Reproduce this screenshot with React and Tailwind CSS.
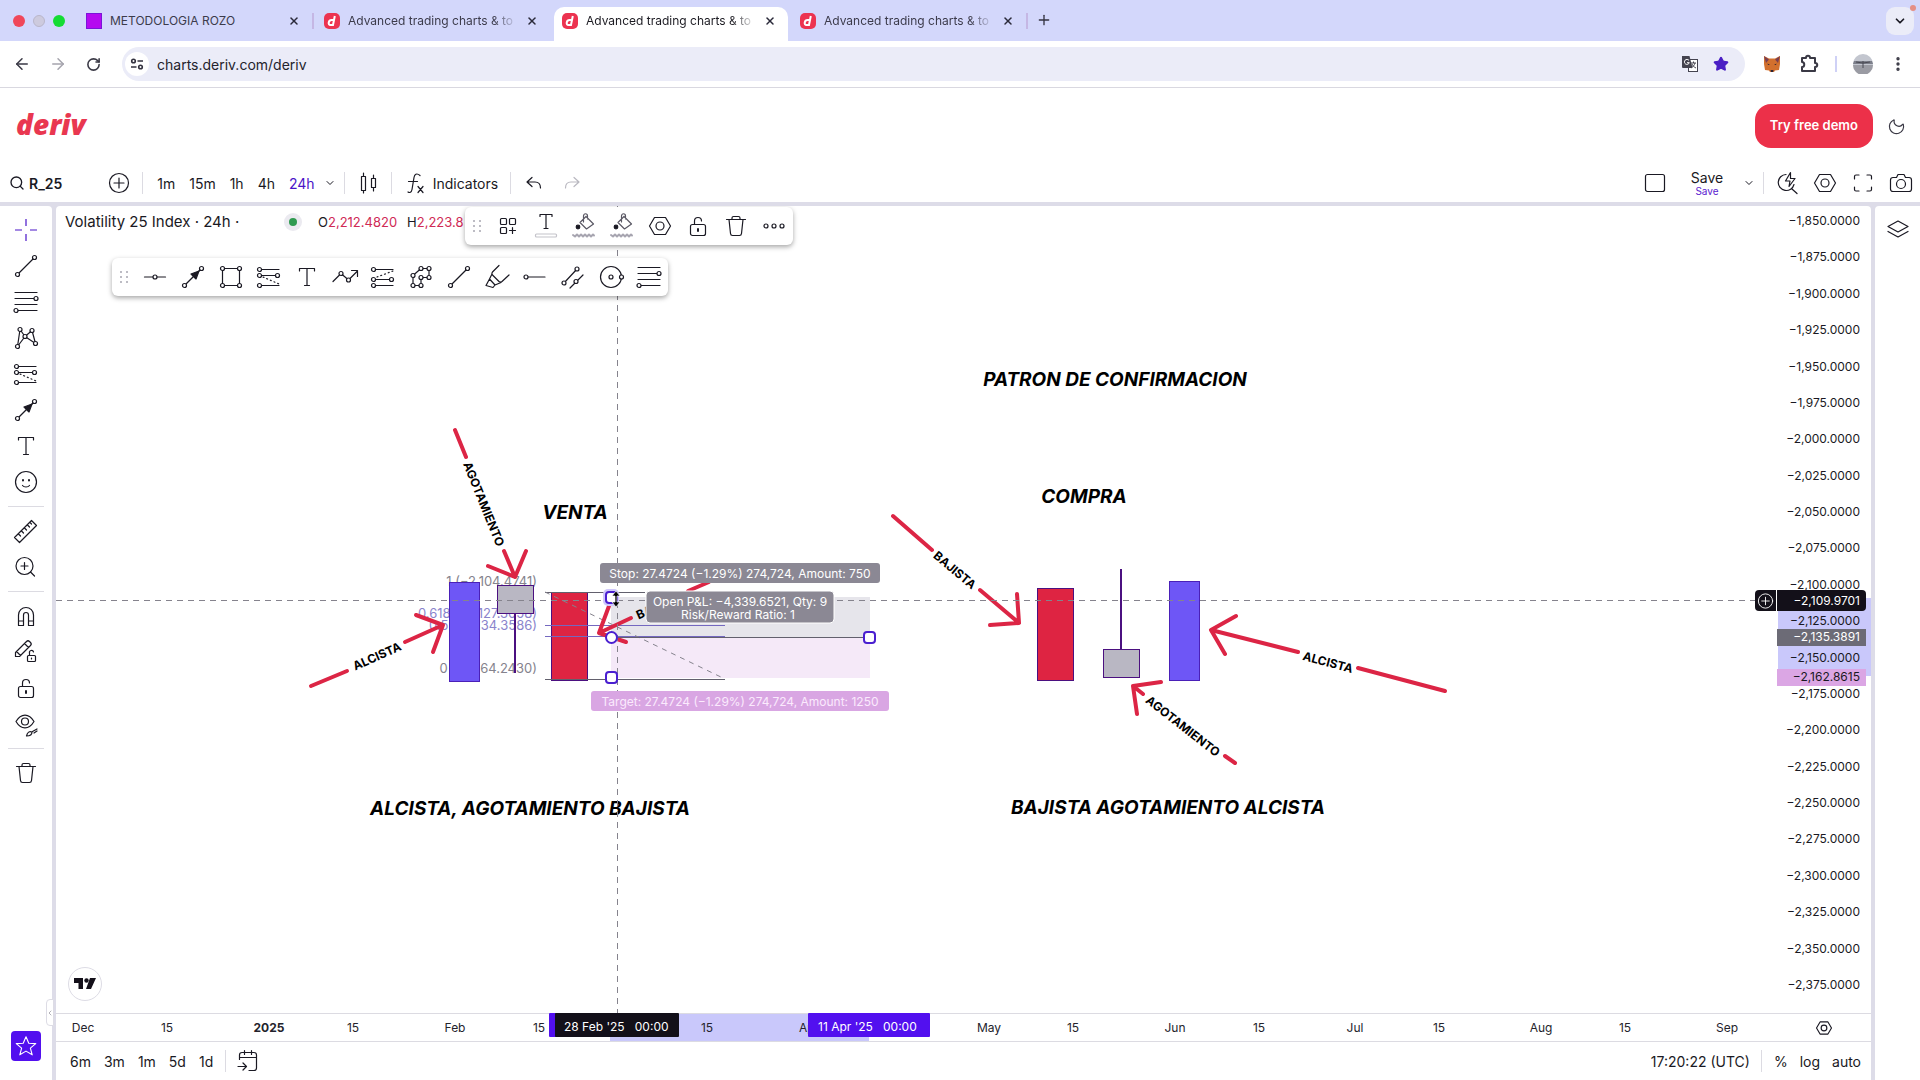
import React from 'react';
import clsx from 'clsx';
import { ArrowLeft, ArrowRight, RotateCw, X, Plus, ChevronDown, ChevronLeft, Moon, Search, Star, EllipsisVertical } from 'lucide-react';

const RED = '#dc2545';

const Icon = ({ size = 28, width = 1.2, children }) => (
    <svg
        width={size}
        height={size}
        viewBox="0 0 28 28"
        fill="none"
        stroke="currentColor"
        strokeWidth={width}
        strokeLinecap="round"
        strokeLinejoin="round"
        aria-hidden="true"
    >
        {children}
    </svg>
);

/* Small hollow anchor used by most of the drawing tool icons */
const Dot = ({ x, y }) => <circle cx={x} cy={y} r="2" fill="white" />;

const icons = {
    cross: <path d="M14 3v7M14 18v7M3 14h7M18 14h7" strokeLinecap="butt" />,
    trend: <><path d="M5.5 22.5l17-17" /><Dot x={5.5} y={22.5} /><Dot x={22.5} y={5.5} /></>,
    fib: <><path d="M3 4.5h22M3 10.5h22M3 16.5h22M3 22.5h22" /><Dot x={24} y={10.5} /><Dot x={4} y={22.5} /></>,
    pattern: (
        <>
            <path d="M5.5 22.5L8 5.5l5 7 7-6 3.5 13L13 12.5z" />
            <Dot x={8} y={5.5} /><Dot x={20} y={6.5} /><Dot x={13} y={12.5} /><Dot x={5.5} y={22.5} /><Dot x={23.5} y={19.5} />
        </>
    ),
    projection: (
        <>
            <path d="M4.5 6.5H24M4.5 12.5h18M4.5 22.5H24" />
            <path d="M8 14l16 7" strokeDasharray="1 3" />
            <Dot x={4.5} y={6.5} /><Dot x={4.5} y={12.5} /><Dot x={22.5} y={12.5} /><Dot x={4.5} y={22.5} />
        </>
    ),
    shortPosition: (
        <>
            <path d="M4.5 6.5H24M4.5 16.5h18M4.5 22.5H24" />
            <path d="M8 14l16-6" strokeDasharray="1 3" />
            <Dot x={4.5} y={6.5} /><Dot x={4.5} y={16.5} /><Dot x={22.5} y={16.5} /><Dot x={4.5} y={22.5} />
        </>
    ),
    arrow: (
        <>
            <path d="M5.5 22.5l17-17" />
            <path d="M20 8l-3 8-5-5z" fill="currentColor" />
            <Dot x={5.5} y={22.5} /><Dot x={22.5} y={5.5} />
        </>
    ),
    text: <path d="M6.500 8V5.500h15V8M14 5.500v17M11.500 22.500h5" />,
    smile: (
        <>
            <circle cx="14" cy="14" r="10.500" />
            <path d="M10.500 17.500c1.500 2 5.500 2 7 0" />
            <path d="M11 12v.5M17 12v.5" strokeWidth="2" />
        </>
    ),
    ruler: <path d="M2.500 20.500l17-17 5 5-17 17zM6.500 17l2 2M9.500 14l2 2M12.500 11l2 2M15.500 8l2 2M18 5.500l1.500 1.500" />,
    zoomIn: <><circle cx="12.500" cy="13" r="8.500" /><path d="M12.500 9.500v7M9 13h7M18.500 19l4 4" /></>,
    magnet: <path d="M6.500 23.500V13a7.500 7.500 0 0 1 15 0v10.500h-5V13a2.500 2.500 0 0 0-5 0v10.500zM6.500 19h5M16.500 19h5" />,
    pencilLock: (
        <>
            <path d="M3.500 18.500v-4l11-11c1-1 2-1 3 0l1 1c1 1 1 2 0 3l-11 11zM12.500 5.500l4 4M4.500 13.500l4 4" />
            <rect x="15.500" y="17.500" width="8" height="6" rx="1" />
            <path d="M17.500 17.500v-2.500a2 2 0 0 1 4-1M19.500 20v1" />
        </>
    ),
    lock: (
        <>
            <rect x="6.500" y="12.500" width="15" height="11" rx="2" />
            <path d="M10.500 12.500V9a3.500 3.500 0 0 1 7 0" />
            <path d="M14 17v2" strokeWidth="2" />
        </>
    ),
    eye: (
        <>
            <path d="M4 11.500c5-8.500 13-8.500 18 0-5 8.500-13 8.500-18 0z" />
            <circle cx="13" cy="11.500" r="3.500" />
            <path d="M14.500 26c1-4 3-5 5.500-4 0 3-2 4-5.500 4zM20.500 21.500l4.500-2.500M22 23l3-2" />
        </>
    ),
    trash: <path d="M4.500 7.500h19M10 7.500V6c0-1 .5-1.500 1.500-1.500h5c1 0 1.500.5 1.500 1.500v1.500M7 7.500l1.500 14c.1 1.200.8 2 2 2h7c1.200 0 1.900-.8 2-2L21 7.500" />,
    hline: <><path d="M3.500 14h21" /><Dot x={14} y={14} /></>,
    rect: (
        <>
            <rect x="5.500" y="5.500" width="17" height="17" />
            <Dot x={5.5} y={5.5} /><Dot x={22.5} y={5.5} /><Dot x={5.5} y={22.5} /><Dot x={22.5} y={22.5} />
        </>
    ),
    path: <><path d="M2 18.500l8-8 7.500 6.500L26.500 8M20.500 7.500h6v6" /><Dot x={10} y={10.500} /><Dot x={17.500} y={17} /></>,
    poly: (
        <>
            <path d="M14 5.500h8v9h-8v8H6v-10z" />
            <Dot x={14} y={5.5} /><Dot x={22} y={5.5} /><Dot x={22} y={14.5} /><Dot x={14} y={14.5} /><Dot x={14} y={22.5} /><Dot x={6} y={22.5} /><Dot x={6} y={12.5} />
        </>
    ),
    brush: <path d="M16 2.500L9.500 9c-.8.800-.8 2 0 3l6.500 6.500c1 .8 2 .8 3 0l7-6.500M9 11l-2.500 5 5.500 6 6-2.500M6.500 16L3 22.500l7 2 2-2.500" />,
    ray: <><path d="M5 14h19" /><Dot x={5} y={14} /></>,
    channel: <><path d="M5 20L18 6M11 25L24 12" /><Dot x={5} y={20} /><Dot x={18} y={6} /><Dot x={17} y={18.500} /></>,
    circle: <><circle cx="14" cy="14" r="10.500" /><circle cx="14" cy="14" r="2" /><Dot x={24.500} y={14} /></>,
    template: (
        <>
            <rect x="6.500" y="6.500" width="6" height="6" rx="1" /><rect x="15.500" y="6.500" width="6" height="6" rx="1" />
            <rect x="6.500" y="15.500" width="6" height="6" rx="1" /><path d="M18.500 15.500v6M15.500 18.500h6" />
        </>
    ),
    textColor: (
        <>
            <path d="M8 4.500V2.500h12v2M14 2.500v14M12 16.500h4" />
            <rect x="3.500" y="22" width="21" height="3" rx="1" stroke="#c4c3ca" />
        </>
    ),
    bucket: (
        <>
            <path d="M10 10.500l6-6 7.500 7.500-7 5zM13.500 10V4c0-3 4-3 4 0v3" stroke="#5b5965" />
            <circle cx="8" cy="15" r="1.800" fill="currentColor" />
            <path d="M3 23l2 1.500 2-2 2 2 2-2 2 2 2-2 2 2 2-2 2 2 2-2 1 1" stroke="#a7a5b0" strokeWidth="2" />
        </>
    ),
    hexagon: <><path d="M8.500 5.500h11L24.500 14l-5 8.500h-11L3.500 14z" /><circle cx="14" cy="14" r="4" /></>,
    more: <><circle cx="6" cy="14" r="2" /><circle cx="14" cy="14" r="2" /><circle cx="22" cy="14" r="2" /></>,
    addCircle: <><circle cx="14" cy="14" r="9.500" /><path d="M14 9v10M9 14h10" /></>,
    candles: <path d="M7.500 7.500h4v14h-4zM9.500 4v3.500M9.500 21.500V24M17.500 9.500h4v9h-4zM19.500 6v3.500M19.500 18.500V22" />,
    fx: <path d="M19 6.500c-3.500-3-5.500-1-6 2l-2 12c-.5 3-2.500 3.500-4 2.500M7.500 12.500h9M17 17.500l5 6M22 17.500l-5 6" />,
    undo: <path d="M12 8.500l-5 4.500 5 4.500M7 13h8c3.500 0 5.500 2 5.500 6" />,
    redo: <path d="M16 8.500l5 4.500-5 4.500M21 13h-8c-3.500 0-5.500 2-5.500 6" />,
    layout: <rect x="4.500" y="5.500" width="19" height="17" rx="2" />,
    quick: <path d="M13 5.500a8 8 0 1 0 8 10M19 20l5 4.500M17.500 3.500l-5 8.500h4.500l-1 5.500 6-8h-4.500z" />,
    full: <path d="M5.500 10V7.500c0-1 .5-1.500 1.500-1.500h3M18 6h3c1 0 1.500.5 1.500 1.500V10M22.500 18v2.500c0 1-.5 1.500-1.500 1.500h-3M10 22H7c-1 0-1.500-.5-1.500-1.500V18" />,
    camera: <><path d="M6 8.500h3.500L11 5.500h6l1.500 3H22c1.500 0 2.500 1 2.500 2.500v9c0 1.500-1 2.500-2.500 2.500H6c-1.500 0-2.500-1-2.500-2.500v-9C3.500 9.500 4.500 8.500 6 8.500z" /><circle cx="14" cy="15" r="4.500" /></>,
    calendar: <path d="M5.500 12.500V8c0-1.500.8-2.500 2.500-2.500h12c1.500 0 2.500 1 2.500 2.500v13c0 1.500-1 2.500-2.500 2.500h-5M5.500 10.500h17M10.500 3.500v4M17.500 3.500v4M4 19.500h8M9 16l3.500 3.500L9 23" />,
    star: <path d="M14 4l3 7 7.500.5-5.800 4.800 2 7.200L14 19.500 7.300 23.500l2-7.200-5.800-4.800L11 11z" />,
    layers: <path d="M14 5l10 5.500L14 16 4 10.500zM4 15.500L14 21l10-5.500" />,
};

const IconButton = ({ name, label, className, size, width }) => (
    <button type="button" aria-label={label || name} className={clsx('flex shrink-0 items-center justify-center', className)}>
        <Icon size={size} width={width}>{icons[name]}</Icon>
    </button>
);

const DerivMark = () => (
    <svg className="shrink-0" width="16" height="16" viewBox="0 0 16 16" aria-hidden="true">
        <rect width="16" height="16" rx="5" fill="#ec3350" />
        <path d="M10.800 3L9 12H6.500c-3 0-2-5 1-5h2" fill="none" stroke="white" strokeWidth="2" />
    </svg>
);

const tabs = [
    { title: 'METODOLOGIA ROZO', purple: true, divider: true },
    { title: 'Advanced trading charts & to' },
    { title: 'Advanced trading charts & to', active: true },
    { title: 'Advanced trading charts & to', divider: true },
];

const BrowserTabs = () => (
    <div className="flex h-[41px] items-end bg-[#d3d7fb] pr-[6px]">
        <div className="flex h-[41px] w-[76px] shrink-0 items-center gap-2 pl-[13px]">
            <span className="h-3 w-3 rounded-full bg-[#f0475a]" />
            <span className="h-3 w-3 rounded-full border border-[#b9b6ca] bg-[#cdcade]" />
            <span className="h-3 w-3 rounded-full bg-[#14dc33]" />
        </div>
        {tabs.map((tab, i) => (
            <div key={i} className="relative flex h-[34px] w-[238px] shrink-0 px-[2px]">
                <div className={clsx('relative flex h-full w-full items-center rounded-t-[10px] pr-3 pb-[7px] pl-2', tab.active && 'bg-white')}>
                    {tab.purple ? (
                        <span className="h-4 w-4 shrink-0 border border-[#7a14d8] bg-[#b50af0]" />
                    ) : (
                        <DerivMark />
                    )}
                    <a
                        href="#tab"
                        className={clsx(
                            'ml-2 w-[170px] text-[12px] leading-4 whitespace-nowrap',
                            tab.active ? 'text-[#1c1b22]' : 'text-[#3c3b4b]',
                            !tab.purple && '[mask-image:linear-gradient(to_right,black_85%,transparent)]'
                        )}
                    >
                        {tab.title}
                    </a>
                    <button type="button" aria-label="Close tab" className="ml-auto">
                        <X className="h-3 w-3 text-[#2b2a3a]" strokeWidth={3} />
                    </button>
                </div>
                {tab.divider && <span className="absolute top-[6px] right-0 h-4 w-[2px] bg-[#c5b7e4]" />}
            </div>
        ))}
        <button type="button" aria-label="New tab" className="mb-[13px] ml-2">
            <Plus className="h-4 w-4 text-[#33323f]" />
        </button>
        <div className="relative mb-[6px] ml-auto">
            <button type="button" aria-label="Search tabs" className="flex h-7 w-7 items-center justify-center rounded-[9px] bg-[#ebecf8]">
                <ChevronDown className="h-[14px] w-[14px]" strokeWidth={3} />
            </button>
            <span className="absolute -top-[2px] -right-[2px] h-[6px] w-[6px] rounded-full bg-[#e58f86]" />
        </div>
    </div>
);

const AddressBar = () => (
    <div className="flex h-[47px] items-center border-b border-[#d9d8e0] bg-white pl-[13px] text-[#3a3945]">
        <button type="button" aria-label="Back"><ArrowLeft className="h-[18px] w-[18px]" /></button>
        <button type="button" aria-label="Forward" className="ml-[18px]"><ArrowRight className="h-[18px] w-[18px] text-[#a5a4ad]" /></button>
        <button type="button" aria-label="Reload" className="ml-[19px]"><RotateCw className="h-[15px] w-[15px]" strokeWidth={2.5} /></button>
        <div className="ml-[21px] flex h-[34px] flex-1 items-center rounded-full bg-[#ebecf8] pr-4 pl-[3px]">
            <span className="flex h-6 w-6 items-center justify-center rounded-full bg-white">
                <svg width="14" height="14" viewBox="0 0 14 14" fill="none" stroke="#33323f" strokeWidth="1.600" aria-hidden="true">
                    <circle cx="3.500" cy="4" r="1.800" /><path d="M7.500 4H13M1 10h5.500" /><circle cx="10.500" cy="10" r="1.800" />
                </svg>
            </span>
            <input aria-label="Address" className="ml-2 flex-1 bg-transparent text-[14px] text-[#24232c] outline-none" defaultValue="charts.deriv.com/deriv" />
            <svg width="18" height="18" viewBox="0 0 18 18" aria-hidden="true">
                <rect x="7.500" y="4.500" width="9" height="12" fill="white" stroke="#44434f" />
                <path d="M10 8h5M12.500 6.500V8M14 8c-.5 2-2 4-4 5M11 9c.8 2 2 3 4 4" fill="none" stroke="#44434f" />
                <path d="M1 1h7.500l3 12H2a1 1 0 0 1-1-1z" fill="#44434f" />
                <path d="M8 5.500a2.500 2.500 0 1 0 .3 2.200H6" fill="none" stroke="white" />
            </svg>
            <Star className="ml-[14px] h-4 w-4 fill-[#4a1fc4] text-[#4a1fc4]" />
        </div>
        <svg className="ml-[18px]" width="18" height="18" viewBox="0 0 18 18" aria-hidden="true">
            <path d="M1 1l5 2.500h6L17 1v8l-1 6-4 .5-1 1.500H7l-1-1.500L2 15 1 9z" fill="#d2702e" />
            <path d="M1 1l5 3.500L3 8zM17 1l-5 3.500L15 8z" fill="#7a3f52" />
            <path d="M4.500 8.500L7 10H5zM13.500 8.500L11 10h2zM7.500 15h3l-.5 2H8z" fill="#2d2435" />
        </svg>
        <svg className="ml-[18px]" width="20" height="20" viewBox="0 0 20 20" fill="none" stroke="#3a3945" strokeWidth="2" strokeLinejoin="round" aria-hidden="true">
            <path d="M3 4h4c0-3 4-3 4 0h5v5c3 0 3 4 0 4v4H3v-4c3 0 3-5 0-5z" />
        </svg>
        <span className="ml-4 h-4 w-[2px] bg-[#cfd1f6]" />
        <svg className="ml-4" width="20" height="20" viewBox="0 0 20 20" aria-hidden="true">
            <circle cx="10" cy="10" r="10" fill="#c3c6cf" />
            <path d="M1 7h18l1 3H0z" fill="#7c7f8a" /><path d="M0 11h20a10 10 0 0 1-20 0z" fill="#9a9ba3" />
            <path d="M3 8l7 1 7-1M10 7v7" stroke="#4a4a54" fill="none" />
        </svg>
        <button type="button" aria-label="Menu" className="mr-[13px] ml-4"><EllipsisVertical className="h-[18px] w-[18px]" strokeWidth={2.5} /></button>
    </div>
);

const VDivider = ({ className }) => <span className={clsx('h-[22px] w-px shrink-0 bg-[#dcdbe2]', className)} />;

const ChartHeader = () => (
    <>
        <header className="flex h-[76px] items-center bg-white pr-[14px] pl-4">
            <a href="#home" className="pb-1 font-['Open_Sans',sans-serif] text-[28px] leading-8 font-extrabold text-[#e93750] italic">deriv</a>
            <button type="button" className="ml-auto h-11 rounded-2xl bg-[#ec3049] px-[15px] text-[13px] font-semibold text-white">Try free demo</button>
            <button type="button" aria-label="Dark mode" className="ml-[14px]">
                <Moon className="h-[19px] w-[19px] -rotate-[20deg] text-[#3a3945]" strokeWidth={1.5} />
            </button>
        </header>
        <div className="flex h-[38px] items-center bg-white pr-[5px] pl-[9px] text-[14px]">
            <button type="button" className="flex items-center gap-1 font-semibold">
                <Search className="h-4 w-4" strokeWidth={2} />R_25
            </button>
            <IconButton name="addCircle" label="Compare" className="ml-[43px]" />
            <VDivider className="ml-[9px]" />
            <div className="ml-[14px] flex gap-[14px]">
                <button type="button">1m</button>
                <button type="button">15m</button>
                <button type="button">1h</button>
                <button type="button">4h</button>
                <button type="button" className="text-[#4a14c8]">24h</button>
            </div>
            <button type="button" aria-label="Intervals" className="ml-[9px]"><ChevronDown className="h-3 w-3" strokeWidth={2} /></button>
            <VDivider className="ml-2" />
            <IconButton name="candles" label="Candles" className="ml-[9px]" />
            <VDivider className="ml-[9px]" />
            <button type="button" className="ml-[9px] flex items-center gap-1">
                <Icon>{icons.fx}</Icon>Indicators
            </button>
            <VDivider className="ml-3" />
            <IconButton name="undo" label="Undo" className="ml-[9px]" />
            <IconButton name="redo" label="Redo" className="ml-[10px] text-[#b9b8c0]" />
            <IconButton name="layout" label="Layout" className="ml-auto" />
            <button type="button" className="ml-[14px] flex w-12 flex-col items-center leading-4">
                <span>Save</span>
                <span className="text-[10px] leading-[10px] text-[#5b1bd0]">Save</span>
            </button>
            <button type="button" aria-label="Manage layouts" className="ml-[12px]"><ChevronDown className="h-3 w-3" strokeWidth={2} /></button>
            <VDivider className="ml-2" />
            <IconButton name="quick" label="Quick search" className="ml-[9px]" />
            <IconButton name="hexagon" label="Settings" className="ml-[10px]" />
            <IconButton name="full" label="Fullscreen" className="ml-[10px]" />
            <IconButton name="camera" label="Snapshot" className="ml-[10px]" />
        </div>
    </>
);

const toolGroups = [
    ['cross', 'trend', 'fib', 'pattern', 'projection', 'arrow', 'text', 'smile'],
    ['ruler', 'zoomIn'],
    ['magnet', 'pencilLock', 'lock', 'eye'],
    ['trash'],
];

const DrawingBar = () => (
    <aside className="relative flex w-[52px] shrink-0 flex-col items-center rounded-tr bg-white pt-[6px] pb-[19px]">
        {toolGroups.map((group, i) => (
            <React.Fragment key={i}>
                {i > 0 && <div className="flex h-[13px] items-center"><span className="h-px w-9 bg-[#dcdbe2]" /></div>}
                {group.map((name) => (
                    <IconButton key={name} name={name} className={clsx('h-9 w-9', name === 'cross' && 'text-[#4a14c8]')} />
                ))}
            </React.Fragment>
        ))}
        <button type="button" aria-label="Favorites" className="mt-auto flex h-[30px] w-[30px] items-center justify-center rounded bg-[#5210ef] text-white">
            <Icon size={26}>{icons.star}</Icon>
        </button>
        <button type="button" aria-label="Collapse" className="absolute -right-[2px] bottom-[54px] flex h-[27px] w-2 items-center justify-center rounded-l border border-[#dddce5] bg-white">
            <ChevronLeft className="h-2 w-2 shrink-0 text-[#8d8b96]" />
        </button>
    </aside>
);

const Grip = () => (
    <svg className="mr-[3px] shrink-0" width="8" height="13" viewBox="0 0 8 13" fill="#bdbcc4" aria-hidden="true">
        <path d="M0 0h2v2H0zM6 0h2v2H6zM0 5h2v2H0zM6 5h2v2H6zM0 10h2v2H0zM6 10h2v2H6z" />
    </svg>
);

const FloatingBar = ({ names, className }) => (
    <div className={clsx('absolute flex h-[38px] items-center gap-[10px] rounded-md bg-white pr-[5px] pl-2 shadow-[0_2px_5px_rgba(0,0,0,0.35)]', className)}>
        <Grip />
        {names.map((name, i) => <IconButton key={i} name={name} />)}
    </div>
);

const arrows = [
    { label: 'AGOTAMIENTO', x: 484, y: 504, angle: 68, d: 'M455 430L466 457M504 551L515 577M488 566L515 577L526 551' },
    { label: 'ALCISTA', x: 377, y: 656, angle: -24, d: 'M311 686L347 671M405 642L443 625M416 615L443 625L433 652' },
    { label: 'BAJISTA', x: 660, y: 605, angle: -24, d: 'M709 582L688 591M631 618L599 633M609 606L599 633L626 642' },
    { label: 'BAJISTA', x: 955, y: 570, angle: 40, d: 'M893 516L932 550M980 590L1019 623M990 625L1019 623L1017 594' },
    { label: 'ALCISTA', x: 1328, y: 662, angle: 15, d: 'M1445 691L1358 668M1298 652L1211 630M1236 616L1211 630L1225 654' },
    { label: 'AGOTAMIENTO', x: 1183, y: 726, angle: 38, d: 'M1235 763L1225 756M1143 694L1133 686M1161 682L1133 686L1137 714' },
];

const headings = [
    { text: 'PATRON DE CONFIRMACION', x: 1115, y: 379 },
    { text: 'VENTA', x: 575, y: 512 },
    { text: 'COMPRA', x: 1084, y: 496 },
    { text: 'ALCISTA, AGOTAMIENTO BAJISTA', x: 530, y: 808 },
    { text: 'BAJISTA AGOTAMIENTO ALCISTA', x: 1168, y: 807 },
];

const Handle = ({ x, y }) => <rect x={x - 5} y={y - 5} width="11" height="11" rx="3" fill="white" stroke="#4a1fd0" strokeWidth="2" />;

const ChartCanvas = () => (
    <svg className="absolute inset-0 h-full w-full" fontFamily="Inter, sans-serif">
        <g transform="translate(-56 -206)" dominantBaseline="central">
            <g fontSize="13" textAnchor="end" fill="#85838d">
                <text x="537" y="581">1 (−2,104.4741)</text>
                <text x="537" y="613" fill="#8a84cc">0.618 (−2,127.3058)</text>
                <text x="537" y="625" fill="#8a84cc">0.5 (−2,134.3586)</text>
                <text x="537" y="668">0 (−2,164.2430)</text>
            </g>

            {/* candles */}
            <g stroke="#4b1080">
                <rect x="449.500" y="582.500" width="30" height="99" fill="#6e56f6" stroke="#4a20b8" />
                <rect x="497.500" y="585.500" width="36" height="28" fill="#b9b7c3" />
                <path d="M515 614V673" strokeWidth="2" />
                <rect x="551.500" y="592.500" width="36" height="88" fill="#de2442" />
                <rect x="1037.500" y="588.500" width="36" height="92" fill="#de2442" />
                <rect x="1103.500" y="649.500" width="36" height="28" fill="#b9b7c3" />
                <path d="M1121 569V650" strokeWidth="2" />
                <rect x="1169.500" y="581.500" width="30" height="99" fill="#6e56f6" stroke="#4a20b8" />
            </g>

            {/* short position */}
            <rect x="611" y="597" width="259" height="40" fill="#e6e5eb" />
            <rect x="611" y="638" width="259" height="40" fill="#f5e9f8" />
            <path d="M545 592.500h100M545 679.500h180" stroke="#62606d" />
            <path d="M545 625.500h180M545 636.500h180" stroke="#7468c0" />
            <path d="M545 592L725 679" stroke="#85838d" strokeDasharray="5 5" />

            <g fill="none" stroke={RED} strokeWidth="4" strokeLinecap="round" strokeLinejoin="round">
                {arrows.map((a, i) => <path key={i} d={a.d} />)}
            </g>
            <g fontSize="12" fontWeight="700" textAnchor="middle">
                {arrows.map((a, i) => (
                    <text key={i} x={a.x} y={a.y} transform={`rotate(${a.angle} ${a.x} ${a.y})`}>{a.label}</text>
                ))}
            </g>
            <g fontSize="19" fontWeight="700" fontStyle="italic" textAnchor="middle">
                {headings.map((h) => <text key={h.text} x={h.x} y={h.y}>{h.text}</text>)}
            </g>

            <path d="M611 637.500h259" stroke="#62606d" />
            <path d="M617.500 206V1013M56 600.500H1755" stroke="#85838d" strokeDasharray="6 5" />

            <g fontSize="12" textAnchor="middle" fill="white">
                <rect x="600" y="563" width="280" height="20" rx="3" fill="#8b8894" />
                <text x="740" y="573">Stop: 27.4724 (−1.29%) 274,724, Amount: 750</text>
                <rect x="646" y="591" width="188" height="32" rx="4" fill="#8b8894" stroke="white" />
                <text x="740" y="601">Open P&amp;L: −4,339.6521, Qty: 9</text>
                <text x="738" y="614">Risk/Reward Ratio: 1</text>
                <rect x="591" y="691" width="298" height="20" rx="3" fill="#d9a6e3" />
                <text x="740" y="701" fill="#fbeafd">Target: 27.4724 (−1.29%) 274,724, Amount: 1250</text>
            </g>

            <rect x="603" y="589" width="16" height="17" rx="5" fill="#cfc8fa" />
            <Handle x={611} y={597} />
            <Handle x={611} y={677} />
            <Handle x={869} y={637} />
            <circle cx="611.500" cy="637.500" r="5.500" fill="white" stroke="#4a1fd0" strokeWidth="2" />
            <path d="M616 591l4 5h-3v6h3l-4 5-4-5h3v-6h-3z" fill="black" stroke="white" strokeWidth=".7" />
        </g>
    </svg>
);

const prices = Array.from({ length: 22 }, (_, i) => `−${(1850 + i * 25).toLocaleString('en-US')}.0000`);

const PriceAxis = () => (
    <div className="relative flex w-[94px] shrink-0 flex-col text-right text-[12px] leading-4">
        <div className="absolute top-[392px] right-0 h-[78px] w-[93px] bg-[#c9c8fb]" />
        <div className="relative flex flex-1 flex-col justify-between pt-[7px] pr-[11px] pb-5">
            {prices.map((p) => <span key={p}>{p}</span>)}
        </div>
        <div className="absolute top-[384px] right-[5px] flex h-[21px]">
            <button type="button" aria-label="Add alert" className="mr-px flex w-[21px] items-center justify-center rounded-l-sm bg-[#131019] text-white">
                <Icon size={24}>{icons.addCircle}</Icon>
            </button>
            <span className="w-[89px] rounded-r-sm bg-[#131019] pr-[6px] leading-[21px] text-white">−2,109.9701</span>
        </div>
        <span className="absolute top-[423px] right-[5px] h-[17px] w-[89px] bg-[#6c6b76] pr-[6px] text-white">−2,135.3891</span>
        <span className="absolute top-[463px] right-[5px] h-[17px] w-[89px] bg-[#dba6e4] pr-[6px]">−2,162.8615</span>
    </div>
);

const ticks = [
    ['Dec', 27], ['15', 111], ['2025', 213], ['15', 297], ['Feb', 399], ['15', 483], ['15', 651], ['Apr', 753],
    ['May', 933], ['15', 1017], ['Jun', 1119], ['15', 1203], ['Jul', 1299], ['15', 1383], ['Aug', 1485], ['15', 1569], ['Sep', 1671],
];

const TimeAxis = () => (
    <div className="flex h-[29px] shrink-0 items-center border-y border-[#dcdbe2]">
        <svg className="-my-px h-[29px] flex-1" fontFamily="Inter, sans-serif" fontSize="12" fill="#24232c">
            <rect x="554" y="1" width="259" height="27" fill="#c9c8fb" />
            {ticks.map(([label, x]) => (
                <text key={x} x={x} y="14" textAnchor="middle" dominantBaseline="central" fontWeight={label === '2025' ? 700 : 400}>{label}</text>
            ))}
            <rect x="493" y="0" width="20" height="24" rx="1" fill="#5210ef" />
            <rect x="499" y="0" width="124" height="24" rx="1" fill="#131019" />
            <rect x="752" y="0" width="122" height="24" rx="1" fill="#5210ef" />
            <g fill="white" dominantBaseline="central">
                <text x="508" y="13">28 Feb '25{'\u00a0\u00a0\u00a0'}00:00</text>
                <text x="762" y="13">11 Apr '25{'\u00a0\u00a0\u00a0'}00:00</text>
            </g>
        </svg>
        <div className="flex w-[94px] justify-center">
            <IconButton name="hexagon" label="Axis settings" size={20} width={1.6} />
        </div>
    </div>
);

const BottomBar = () => (
    <div className="flex h-[38px] shrink-0 items-center pr-[10px] pl-[14px] text-[14px]">
        <div className="flex gap-[13px]">
            {['6m', '3m', '1m', '5d', '1d'].map((r) => <button key={r} type="button">{r}</button>)}
        </div>
        <VDivider className="ml-3" />
        <IconButton name="calendar" label="Go to" className="ml-2" />
        <button type="button" className="ml-auto">17:20:22 (UTC)</button>
        <VDivider className="mr-3 ml-[11px]" />
        <div className="flex gap-3">
            <button type="button">%</button>
            <button type="button">log</button>
            <button type="button">auto</button>
        </div>
    </div>
);

const App = () => (
    <div className="flex min-h-screen flex-col bg-white font-[Inter,sans-serif] text-[#1a1923]">
        <BrowserTabs />
        <AddressBar />
        <ChartHeader />
        <div className="flex flex-1 gap-1 bg-[#dddce8] pt-1">
            <DrawingBar />
            <main className="flex min-w-0 flex-1 flex-col rounded-t bg-white">
                <div className="flex flex-1">
                    <div className="relative min-w-0 flex-1 overflow-hidden">
                        <ChartCanvas />
                        <div className="relative flex items-center pt-[4px] pl-[9px] leading-6">
                            <h1 className="w-[219px] text-[15px]">Volatility 25 Index · 24h ·</h1>
                            <span className="flex h-[18px] w-[18px] items-center justify-center rounded-full bg-[#ebeaf0]">
                                <span className="h-2 w-2 rounded-full bg-[#2f9a50]" />
                            </span>
                            <span className="ml-4 text-[13px]">O<span className="text-[#cf2a55]">2,212.4820</span></span>
                            <span className="ml-[10px] text-[13px]">H<span className="text-[#cf2a55]">2,223.8</span></span>
                        </div>
                        <FloatingBar className="top-px left-[409px]" names={['template', 'textColor', 'bucket', 'bucket', 'hexagon', 'lock', 'trash', 'more']} />
                        <FloatingBar
                            className="top-[52px] left-14"
                            names={['hline', 'arrow', 'rect', 'projection', 'text', 'path', 'shortPosition', 'poly', 'trend', 'brush', 'ray', 'channel', 'circle', 'fib']}
                        />
                        <a href="#tradingview" aria-label="TradingView" className="absolute bottom-3 left-3 flex h-[34px] w-[34px] items-center justify-center rounded-full border border-[#dddce5] bg-white">
                            <svg width="22" height="12" viewBox="0 0 22 12" fill="#131019" aria-hidden="true">
                                <path d="M0 0h9v11H4.500V5H0zM16 0h6l-5 11h-5z" /><circle cx="12.500" cy="2.500" r="2.200" />
                            </svg>
                        </a>
                    </div>
                    <PriceAxis />
                </div>
                <TimeAxis />
                <BottomBar />
            </main>
            <aside className="flex w-[45px] shrink-0 flex-col items-center rounded-tl bg-white pt-[10px]">
                <IconButton name="layers" label="Object tree" />
            </aside>
        </div>
    </div>
);

export default App;
